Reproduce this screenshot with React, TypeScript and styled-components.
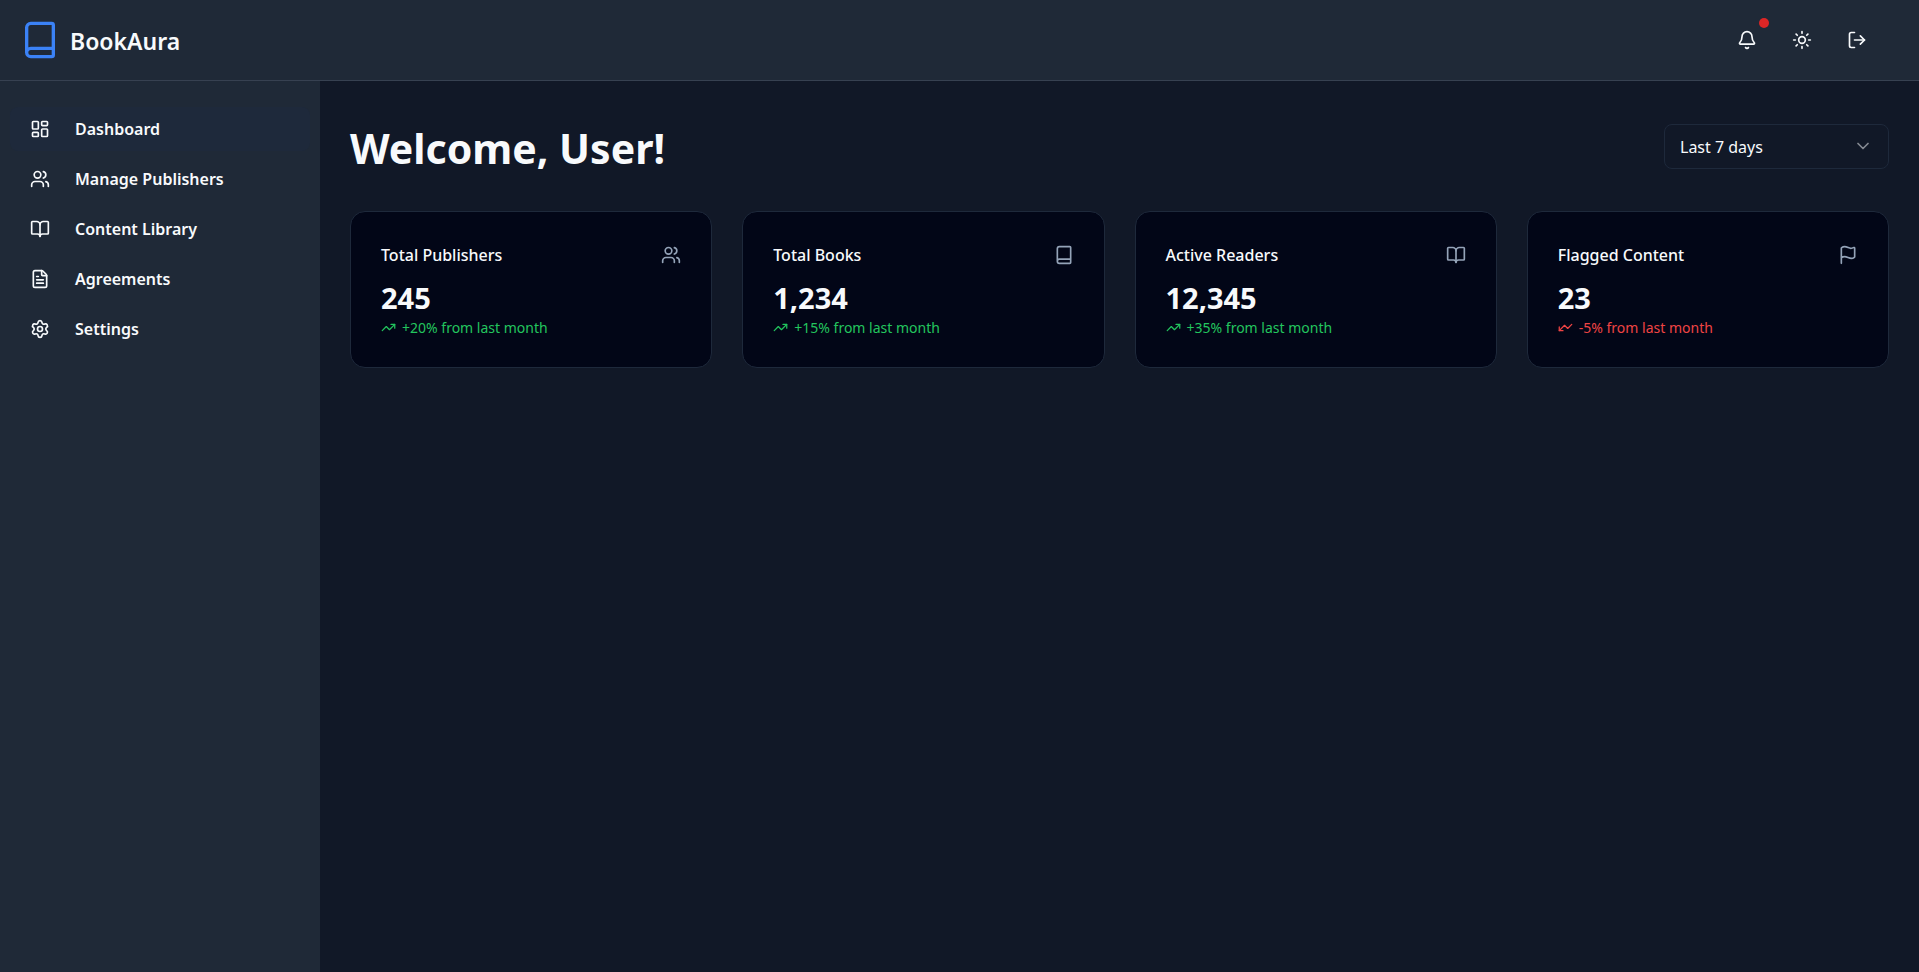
import React from 'react';
import styled, { createGlobalStyle } from 'styled-components';
import {
  Bell,
  Book,
  BookOpen,
  ChevronDown,
  FileText,
  Flag,
  LayoutDashboard,
  LogOut,
  Settings,
  Sun,
  TrendingUp,
  Users,
  type LucideIcon,
} from 'lucide-react';

const GlobalStyle = createGlobalStyle`
  *, *::before, *::after { box-sizing: border-box; }
  body {
    margin: 0;
    background: #111827;
    color: #f8fafc;
    font-family: 'Segoe UI', 'Noto Sans', 'Open Sans', sans-serif;
    font-size: 16px;
    line-height: 25px;
  }
  h1, h2, p { margin: 0; }
  button, select { font: inherit; color: inherit; }
  svg { display: block; flex-shrink: 0; }
`;

const Page = styled.div`
  display: flex;
  flex-direction: column;
  min-height: 100vh;
`;

const Header = styled.header`
  display: flex;
  align-items: center;
  justify-content: space-between;
  height: 81px;
  padding: 0 40px 0 20px;
  background: #1f2937;
  border-bottom: 1px solid #374151;
`;

const Brand = styled.a`
  display: flex;
  align-items: center;
  gap: 10px;
  color: inherit;
  text-decoration: none;
  font-size: 23px;
  font-weight: 600;
  line-height: 35px;
`;

const BrandIcon = styled(Book)`
  color: #3b82f6;
`;

const BrandName = styled.span`
  padding-top: 2px;
`;

const Actions = styled.div`
  display: flex;
  gap: 10px;
`;

const IconButton = styled.button`
  position: relative;
  display: grid;
  place-items: center;
  width: 45px;
  height: 45px;
  padding: 0;
  border: 0;
  border-radius: 8px;
  background: transparent;
  cursor: pointer;
  &:hover { background: #1e293b; }
`;

const Unread = styled.span`
  position: absolute;
  top: 0;
  right: 0;
  width: 10px;
  height: 10px;
  border-radius: 50%;
  background: #dc2626;
`;

const Body = styled.div`
  display: flex;
  flex: 1;
`;

const Sidebar = styled.nav`
  display: flex;
  flex-direction: column;
  gap: 6px;
  flex: 0 0 320px;
  padding: 26px 10px;
  background: #1f2937;
`;

const NavItem = styled.a<{ $active?: boolean }>`
  display: flex;
  align-items: center;
  gap: 25px;
  height: 44px;
  padding: 0 20px;
  border-radius: 8px;
  background: ${(p) => (p.$active ? '#1e293b' : 'transparent')};
  color: inherit;
  text-decoration: none;
  font-weight: 600;
  line-height: 24px;
  &:hover { background: #1e293b; }
`;

const Main = styled.main`
  display: flex;
  flex-direction: column;
  gap: 38px;
  flex: 1;
  min-width: 0;
  padding: 38px 30px;
`;

const TitleRow = styled.div`
  display: flex;
  align-items: center;
  justify-content: space-between;
`;

const Title = styled.h1`
  padding-top: 4px;
  font-size: 41px;
  font-weight: 700;
  line-height: 50px;
`;

const SelectBox = styled.div`
  display: grid;
  align-items: center;
  width: 225px;
  > * { grid-area: 1 / 1; }
`;

const Select = styled.select`
  appearance: none;
  width: 100%;
  height: 45px;
  padding: 2px 40px 0 15px;
  border: 1px solid #1e293b;
  border-radius: 8px;
  background: #111827;
`;

const SelectArrow = styled(ChevronDown)`
  justify-self: end;
  margin-right: 16px;
  opacity: 0.5;
  pointer-events: none;
`;

const Cards = styled.section`
  display: grid;
  grid-template-columns: repeat(4, minmax(0, 1fr));
  gap: 30px;
`;

const Card = styled.article`
  padding: 30px;
  border: 1px solid #1e293b;
  border-radius: 15px;
  background: #020617;
`;

const CardHead = styled.div`
  display: flex;
  align-items: center;
  justify-content: space-between;
  padding-bottom: 10px;
  color: #94a3b8;
`;

const CardTitle = styled.h2`
  padding-top: 2px;
  color: #f8fafc;
  font-size: 16px;
  font-weight: 500;
  line-height: 23px;
`;

const Figure = styled.p`
  padding-top: 2px;
  font-size: 29px;
  font-weight: 700;
  line-height: 38px;
`;

const Trend = styled.p<{ $down?: boolean }>`
  display: flex;
  align-items: center;
  gap: 6px;
  color: ${(p) => (p.$down ? '#ef4444' : '#22c55e')};
  font-size: 14px;
  line-height: 18px;
  svg { transform: ${(p) => (p.$down ? 'rotate(180deg)' : 'none')}; }
`;

const TrendText = styled.span`
  padding-top: 2px;
`;

const navItems: { label: string; icon: LucideIcon; active?: boolean }[] = [
  { label: 'Dashboard', icon: LayoutDashboard, active: true },
  { label: 'Manage Publishers', icon: Users },
  { label: 'Content Library', icon: BookOpen },
  { label: 'Agreements', icon: FileText },
  { label: 'Settings', icon: Settings },
];

const stats: { title: string; value: string; change: string; icon: LucideIcon; down?: boolean }[] = [
  { title: 'Total Publishers', value: '245', change: '+20%', icon: Users },
  { title: 'Total Books', value: '1,234', change: '+15%', icon: Book },
  { title: 'Active Readers', value: '12,345', change: '+35%', icon: BookOpen },
  { title: 'Flagged Content', value: '23', change: '-5%', icon: Flag, down: true },
];

export default function App() {
  return (
    <Page>
      <GlobalStyle />
      <Header>
        <Brand href="#">
          <BrandIcon size={40} />
          <BrandName>BookAura</BrandName>
        </Brand>
        <Actions>
          <IconButton type="button" aria-label="Notifications">
            <Bell size={20} />
            <Unread />
          </IconButton>
          <IconButton type="button" aria-label="Toggle theme">
            <Sun size={20} />
          </IconButton>
          <IconButton type="button" aria-label="Log out">
            <LogOut size={20} />
          </IconButton>
        </Actions>
      </Header>
      <Body>
        <Sidebar aria-label="Main">
          {navItems.map(({ label, icon: Icon, active }) => (
            <NavItem key={label} href="#" $active={active} aria-current={active ? 'page' : undefined}>
              <Icon size={20} />
              {label}
            </NavItem>
          ))}
        </Sidebar>
        <Main>
          <TitleRow>
            <Title>Welcome, User!</Title>
            <SelectBox>
              <Select aria-label="Period" defaultValue="7">
                <option value="7">Last 7 days</option>
                <option value="30">Last 30 days</option>
                <option value="90">Last 90 days</option>
              </Select>
              <SelectArrow size={20} />
            </SelectBox>
          </TitleRow>
          <Cards>
            {stats.map(({ title, value, change, icon: Icon, down }) => (
              <Card key={title}>
                <CardHead>
                  <CardTitle>{title}</CardTitle>
                  <Icon size={20} />
                </CardHead>
                <Figure>{value}</Figure>
                <Trend $down={down}>
                  <TrendingUp size={15} />
                  <TrendText>{change} from last month</TrendText>
                </Trend>
              </Card>
            ))}
          </Cards>
        </Main>
      </Body>
    </Page>
  );
}
